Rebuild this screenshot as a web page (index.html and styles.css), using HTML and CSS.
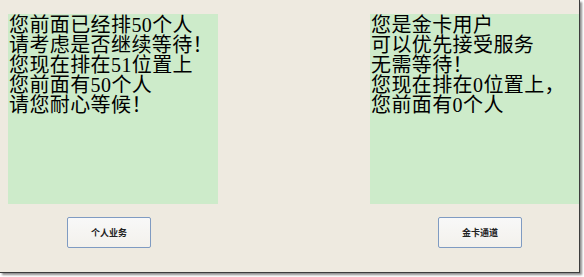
FILE: index.html
```html
<!DOCTYPE html>
<html lang="zh-CN">
<head>
<meta charset="utf-8">
<title>排队</title>
<link rel="stylesheet" href="styles.css">
</head>
<body>
<div class="window">
  <div class="panels">
    <div class="panel panel-left">
      <p class="msg">您前面已经排50个人<br>请考虑是否继续等待！<br>您现在排在51位置上<br>您前面有50个人<br>请您耐心等候！</p>
    </div>
    <div class="panel panel-right">
      <p class="msg">您是金卡用户<br>可以优先接受服务<br>无需等待！<br>您现在排在0位置上，<br>您前面有0个人</p>
    </div>
  </div>
  <div class="actions">
    <div class="slot slot-left"><button class="btn">个人业务</button></div>
    <div class="slot slot-right"><button class="btn">金卡通道</button></div>
  </div>
</div>
</body>
</html>
```
FILE: styles.css
```css
html, body {
  margin: 0;
  padding: 0;
  background: #ffffff;
}
body {
  width: 584px;
  height: 277px;
  overflow: hidden;
}
.window {
  box-sizing: border-box;
  width: 580px;
  height: 273px;
  background: #eeeae0;
  border-right: 1px solid #3c3c3c;
  border-bottom: 1px solid #3c3c3c;
  box-shadow: 2px 2px 2px rgba(0, 0, 0, 0.45);
  padding-top: 14px;
}
.panels {
  display: flex;
  padding-left: 8px;
  gap: 152px;
}
.panel {
  height: 190px;
  background: #cdebca;
}
.panel-left {
  width: 210px;
}
.panel-right {
  width: 209px;
}
.msg {
  margin: 0;
  padding-top: 1px;
  padding-left: 1px;
  font-family: "Liberation Serif", "Noto Sans CJK SC", serif;
  font-size: 20px;
  line-height: 20px;
  letter-spacing: 0.4px;
  color: #000;
}
.actions {
  display: flex;
  margin-top: 13px;
}
.slot-left {
  padding-left: 67px;
}
.slot-right {
  padding-left: 287px;
}
.btn {
  box-sizing: border-box;
  width: 84px;
  height: 31px;
  margin: 0;
  padding: 0;
  border: 1px solid #7f9bc2;
  border-radius: 2px;
  background: linear-gradient(#f8f8f8, #f3f1ec);
  font-family: "Noto Sans CJK SC", sans-serif;
  font-size: 9px;
  font-weight: bold;
  color: #222;
}
```
